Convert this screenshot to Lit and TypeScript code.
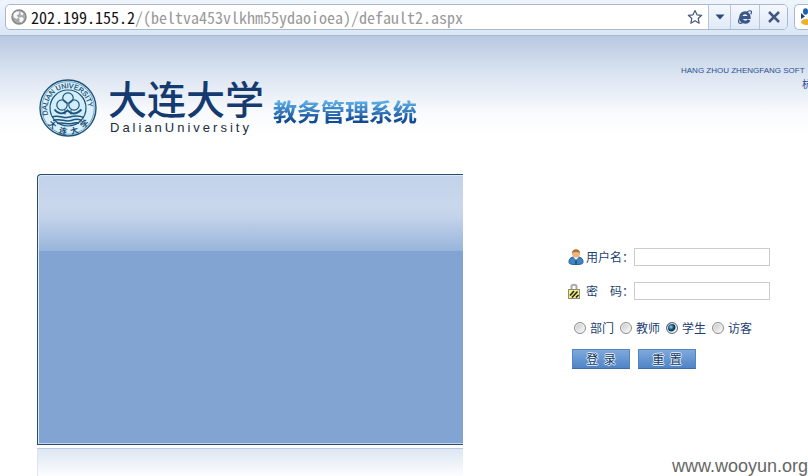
import { LitElement, html, css } from "lit";
import { customElement, state } from "lit/decorators.js";

@customElement("browser-bar")
class BrowserBar extends LitElement {
  static styles = css`
    :host {
      display: flex;
      gap: 6px;
      height: 36px;
      box-sizing: border-box;
      padding: 4px 0 5px 5px;
      background: linear-gradient(#f0f5fc, #dbe7f6);
      border-bottom: 1px solid #a9b9d2;
      overflow: hidden;
    }
    .address {
      flex: 1;
      min-width: 0;
      display: flex;
      align-items: stretch;
      background: #fff;
      border: 1px solid #a9b8cd;
      border-radius: 5px;
      overflow: hidden;
    }
    .globe {
      flex: none;
      align-self: center;
      margin: 0 4px 0 5px;
    }
    .url {
      flex: 1;
      min-width: 0;
      overflow: hidden;
      white-space: nowrap;
      font: 16px/24px "Noto Sans Mono CJK SC", "Noto Sans CJK SC", monospace;
      font-feature-settings: "hwid";
      color: #111;
    }
    .path {
      color: #999;
    }
    button {
      flex: none;
      display: flex;
      align-items: center;
      justify-content: center;
      padding: 0;
      border: 0;
      border-left: 1px solid #b7c5da;
      background: linear-gradient(#f5f8fd, #dfe9f7);
    }
    .star {
      width: 26px;
      border: 0;
      background: none;
    }
    .drop {
      width: 22px;
    }
    .engine {
      width: 29px;
    }
    .stop {
      width: 28px;
    }
    .search {
      flex: 0 0 14px;
      display: flex;
      align-items: center;
      padding-left: 5px;
      box-sizing: border-box;
      background: #fff;
      border: 1px solid #a9b8cd;
      border-right: 0;
      border-radius: 5px 0 0 5px;
      overflow: hidden;
    }
    svg {
      display: block;
      flex: none;
    }
  `;

  render() {
    return html`
      <div class="address">
        <svg class="globe" width="16" height="16" viewBox="0 0 16 16">
          <circle cx="8" cy="8" r="7" fill="#aaa" stroke="#858585" stroke-width="1.4" />
          <path d="M2.500 5 5 2.500 8.500 2.500 7.500 5.500 5.500 6.500 7.500 8.500 5.500 10 2.500 8ZM9.500 2.500 12.500 4.500 11.500 6.500 9.500 5.500ZM8 8.500 11 8 13 10 10.500 13.500 8.500 12.500 8.500 10.500Z" fill="#f8f8f8" />
        </svg>
        <div class="url">202.199.155.2<span class="path">/(beltva453vlkhm55ydaoioea)/default2.aspx</span></div>
        <button class="star" aria-label="收藏">
          <svg width="16" height="16" viewBox="0 0 16 16">
            <path d="M8 1.500 10 5.800 14.700 6.300 11.200 9.500 12.200 14.200 8 11.800 3.800 14.200 4.800 9.500 1.300 6.300 6 5.800Z" fill="#fff" stroke="#47597c" stroke-width="1.200" stroke-linejoin="round" />
          </svg>
        </button>
        <button class="drop" aria-label="历史">
          <svg width="10" height="6" viewBox="0 0 10 6"><path d="M0.500 0.500H9.500L5 5.500Z" fill="#2c4a7e" /></svg>
        </button>
        <button class="engine" aria-label="内核">
          <svg width="16" height="16" viewBox="0 0 16 16" fill="none">
            <path d="M4.200 8.600H12.200C12.400 2.200 3.800 2.200 3.700 8.300 3.600 14.200 10.500 14.200 12 10.800" stroke="#3b5788" stroke-width="3" />
            <path d="M10 3C14 0.500 15.500 2 13.800 5.200M3.200 8C0.500 12.500 1 16 6 13.500" stroke="#3b5788" stroke-width="1.200" />
          </svg>
        </button>
        <button class="stop" aria-label="停止">
          <svg width="12" height="12" viewBox="0 0 12 12"><path d="M1 1 11 11M11 1 1 11" stroke="#3f5782" stroke-width="2.500" /></svg>
        </button>
      </div>
      <div class="search">
        <svg width="16" height="18" viewBox="0 0 16 18">
          <ellipse cx="5.500" cy="3.500" rx="2.500" ry="3.200" fill="#1c62b0" />
          <path d="M1 5 5 8.500 1 11Z" fill="#1b3f7d" />
          <ellipse cx="6" cy="14" rx="5" ry="3" fill="#eeb02c" />
        </svg>
      </div>
    `;
  }
}

@customElement("university-seal")
class UniversitySeal extends LitElement {
  static styles = css`
    :host {
      display: block;
      flex: none;
    }
    svg {
      display: block;
    }
    .latin {
      font: 7px "Liberation Sans", sans-serif;
      fill: #164a72;
      stroke: #164a72;
      stroke-width: 0.2px;
    }
    .hanzi {
      font: bold 8px "Noto Sans CJK SC", sans-serif;
      fill: #164a72;
      text-anchor: middle;
    }
  `;

  render() {
    return html`
      <svg width="58" height="58" viewBox="0 0 58 58">
        <defs>
          <path id="arc" d="M9.200 36A20.500 20.500 0 1 1 45.500 41.500" />
        </defs>
        <g fill="none" stroke="#1f547c">
          <circle cx="29" cy="29" r="28" fill="#d9f1fb" stroke-width="1.400" />
          <circle cx="29" cy="29" r="26.300" stroke-width="0.500" />
          <circle cx="29" cy="29" r="18" fill="#d2eefa" stroke-width="1.200" />
          <circle cx="29" cy="19" r="5.200" stroke-width="1.200" />
          <circle cx="23" cy="26" r="5.200" stroke-width="1.200" />
          <circle cx="35" cy="26" r="5.200" stroke-width="1.200" />
          <path d="M15.500 30.500C19 35 24 36 28.500 31.500 33 36 38 35 42.500 30.500" stroke-width="1.800" />
          <path d="M26 31V35.500M32 31V35.500" />
          <path d="M13 38C20 35.500 25 40 31 38S40 36.500 45 38.500M14 41.500C21 38.500 26 43.500 32 41.500S39 40 43 41.500M18 44.500C24 42.500 28 46 33 44.500S37 44 40 44" stroke-width="1.500" />
        </g>
        <text class="latin"><textPath href="#arc">DALIAN UNIVERSITY</textPath></text>
        <text class="hanzi" transform="translate(11.500 48) rotate(42)">大</text>
        <text class="hanzi" transform="translate(23.500 55) rotate(14)">连</text>
        <text class="hanzi" transform="translate(36 54.500) rotate(-16)">大</text>
        <text class="hanzi" transform="translate(47.500 47) rotate(-44)">学</text>
      </svg>
    `;
  }
}

@customElement("login-form")
class LoginForm extends LitElement {
  static styles = css`
    :host {
      display: block;
      color: #1b3f70;
      font: 12px/18px "Noto Sans CJK SC", sans-serif;
    }
    .field {
      display: flex;
      align-items: center;
      margin-bottom: 16px;
    }
    .field svg {
      flex: none;
      margin-right: 2px;
    }
    .field label {
      flex: none;
      width: 48px;
      white-space: pre;
    }
    .field input {
      width: 136px;
      height: 18px;
      box-sizing: border-box;
      padding: 0 3px;
      border: 1px solid #ccc;
      background: #fff;
      font: inherit;
      outline: 0;
    }
    .roles {
      display: flex;
      gap: 6px;
      margin: 19px 0 12px 6px;
      padding: 0;
      border: 0;
    }
    .roles label {
      display: flex;
      align-items: center;
      gap: 4px;
      width: 40px;
      white-space: nowrap;
    }
    .roles input {
      flex: none;
      appearance: none;
      width: 12px;
      height: 12px;
      margin: 0;
      border: 1px solid #8c8c8c;
      border-radius: 50%;
      background: linear-gradient(135deg, #c4c4c4, #fff);
      box-shadow: inset 0 0 0 1px #f4f4f4;
    }
    .roles input:checked {
      border-color: #567;
      background: radial-gradient(circle at 4px 4px, #8fd6ee, #0d4267 3px, #0d3556 4px, #dce4e8 5px);
    }
    .actions {
      display: flex;
      gap: 8px;
      margin-left: 4px;
    }
    .actions button {
      width: 58px;
      height: 20px;
      padding: 0;
      border: 1px solid #5585c0;
      border-bottom-color: #3c6cac;
      background: linear-gradient(#7fa9dc, #4f84c6);
      color: #123a66;
      font: inherit;
      white-space: pre;
      text-shadow: 1px 0 #e8f1fb, -1px 0 #e8f1fb, 0 1px #e8f1fb, 0 -1px #e8f1fb;
    }
  `;

  @state() private role = "学生";

  render() {
    return html`
      <form @submit=${(e: Event) => e.preventDefault()}>
        <div class="field">
          <svg width="16" height="16" viewBox="0 0 16 16">
            <path d="M1 13C1 8.500 4 8 8 8S15 8.500 15 13C15 15 13 15.500 8 15.500S1 15 1 13Z" fill="#3d86c6" stroke="#1e5a92" />
            <path d="M5.500 8 8 11 10.500 8Z" fill="#fff" />
            <path d="M8 9.500 9 14 8 15 7 14Z" fill="#243f5c" />
            <circle cx="8" cy="4.500" r="4" fill="#eeb47c" />
            <path d="M4 4C4-1 12-1 12 4 10 2.500 6 2.500 4 4Z" fill="#a77339" />
          </svg>
          <label for="user">用户名：</label>
          <input id="user" type="text" />
        </div>
        <div class="field">
          <svg width="16" height="16" viewBox="0 0 16 16">
            <path d="M3.500 7V3.500C3.500 1 8.500 1 8.500 3.500V7" fill="none" stroke="#aaa" stroke-width="2" />
            <rect x="0.500" y="6.500" width="11" height="9" fill="#f4ee77" stroke="#8c8c80" />
            <path d="M2 12.500 6 8M4 14.500 9.500 8.500M8 14.500 10.500 12" stroke="#222" stroke-width="1.600" />
          </svg>
          <label for="pass">密　码：</label>
          <input id="pass" type="password" />
        </div>
        <fieldset class="roles" aria-label="身份">
          ${["部门", "教师", "学生", "访客"].map(
            (r) => html`<label>
              <input type="radio" name="role" .checked=${this.role === r} @change=${() => (this.role = r)} />${r}
            </label>`
          )}
        </fieldset>
        <div class="actions">
          <button type="submit">登  录</button>
          <button type="reset">重  置</button>
        </div>
      </form>
    `;
  }
}

@customElement("app-root")
class AppRoot extends LitElement {
  static styles = css`
    :host {
      display: flex;
      flex-direction: column;
      position: relative;
      min-height: 100vh;
      overflow: hidden;
      background: #fff;
      font-family: "Liberation Sans", "Noto Sans CJK SC", sans-serif;
    }
    .header {
      display: flex;
      align-items: flex-start;
      height: 138px;
      padding-left: 39px;
      background: linear-gradient(#b9c9e1, #d9e3f0 36px, #f8fafd 76px, #fff 100px);
    }
    university-seal {
      margin: 43px 11px 0 0;
    }
    .name {
      margin: 39px 0 0;
      color: #143a70;
      font: 500 39px/44px "Noto Sans CJK SC", sans-serif;
      white-space: nowrap;
    }
    .latin {
      margin: 2px 0 0 2px;
      font: 13px/14px "Liberation Sans", sans-serif;
      letter-spacing: 3px;
      color: #222c3c;
    }
    .system {
      margin: 61px 0 0 9px;
      font: bold 24px/28px "Noto Sans CJK SC", sans-serif;
      white-space: nowrap;
      color: transparent;
      background: linear-gradient(#58a9e4 20%, #124a93 85%);
      background-clip: text;
    }
    .vendor {
      flex: 0 0 127px;
      margin: 28px 0 0 auto;
      overflow: hidden;
      white-space: nowrap;
      font-size: 8px;
      line-height: 14px;
      color: #2c4f93;
    }
    .vendor p {
      margin: 0;
    }
    .vendor .cn {
      padding-left: 121px;
      font-size: 10px;
    }
    .main {
      flex: 1;
      display: grid;
      grid-template-columns: minmax(0, 426fr) minmax(0, 345fr);
      padding-left: 37px;
    }
    .left {
      display: flex;
      flex-direction: column;
      gap: 3px;
    }
    .panel {
      height: 271px;
      box-sizing: border-box;
      border: 1px solid #2b4c70;
      border-right: 0;
      border-radius: 4px 0 0 0;
      background: linear-gradient(#c1d2ea, #c9d7eb 30px, #c3d3ea 42px, #98b4db 76px, #82a4d3 76px);
      box-shadow: inset 1px 1px #dce8f5, inset 0 -1px #c5d6ec;
    }
    .reflection {
      flex: 1;
      border-top: 1px solid #b7c8e0;
      border-left: 1px solid #dce5f1;
      background: linear-gradient(#dde6f2, #fff 30px);
    }
    login-form {
      margin: 74px 0 0 105px;
    }
    .watermark {
      position: absolute;
      right: 0;
      bottom: 0;
      font-size: 18px;
      line-height: 20px;
      color: #666;
    }
  `;

  render() {
    return html`
      <browser-bar></browser-bar>
      <header class="header">
        <university-seal></university-seal>
        <div>
          <h1 class="name">大连大学</h1>
          <p class="latin">DalianUniversity</p>
        </div>
        <h2 class="system">教务管理系统</h2>
        <div class="vendor">
          <p>HANG ZHOU ZHENGFANG SOFT</p>
          <p class="cn">杭</p>
        </div>
      </header>
      <main class="main">
        <div class="left">
          <div class="panel"></div>
          <div class="reflection"></div>
        </div>
        <login-form></login-form>
      </main>
      <div class="watermark">www.wooyun.org</div>
    `;
  }
}
